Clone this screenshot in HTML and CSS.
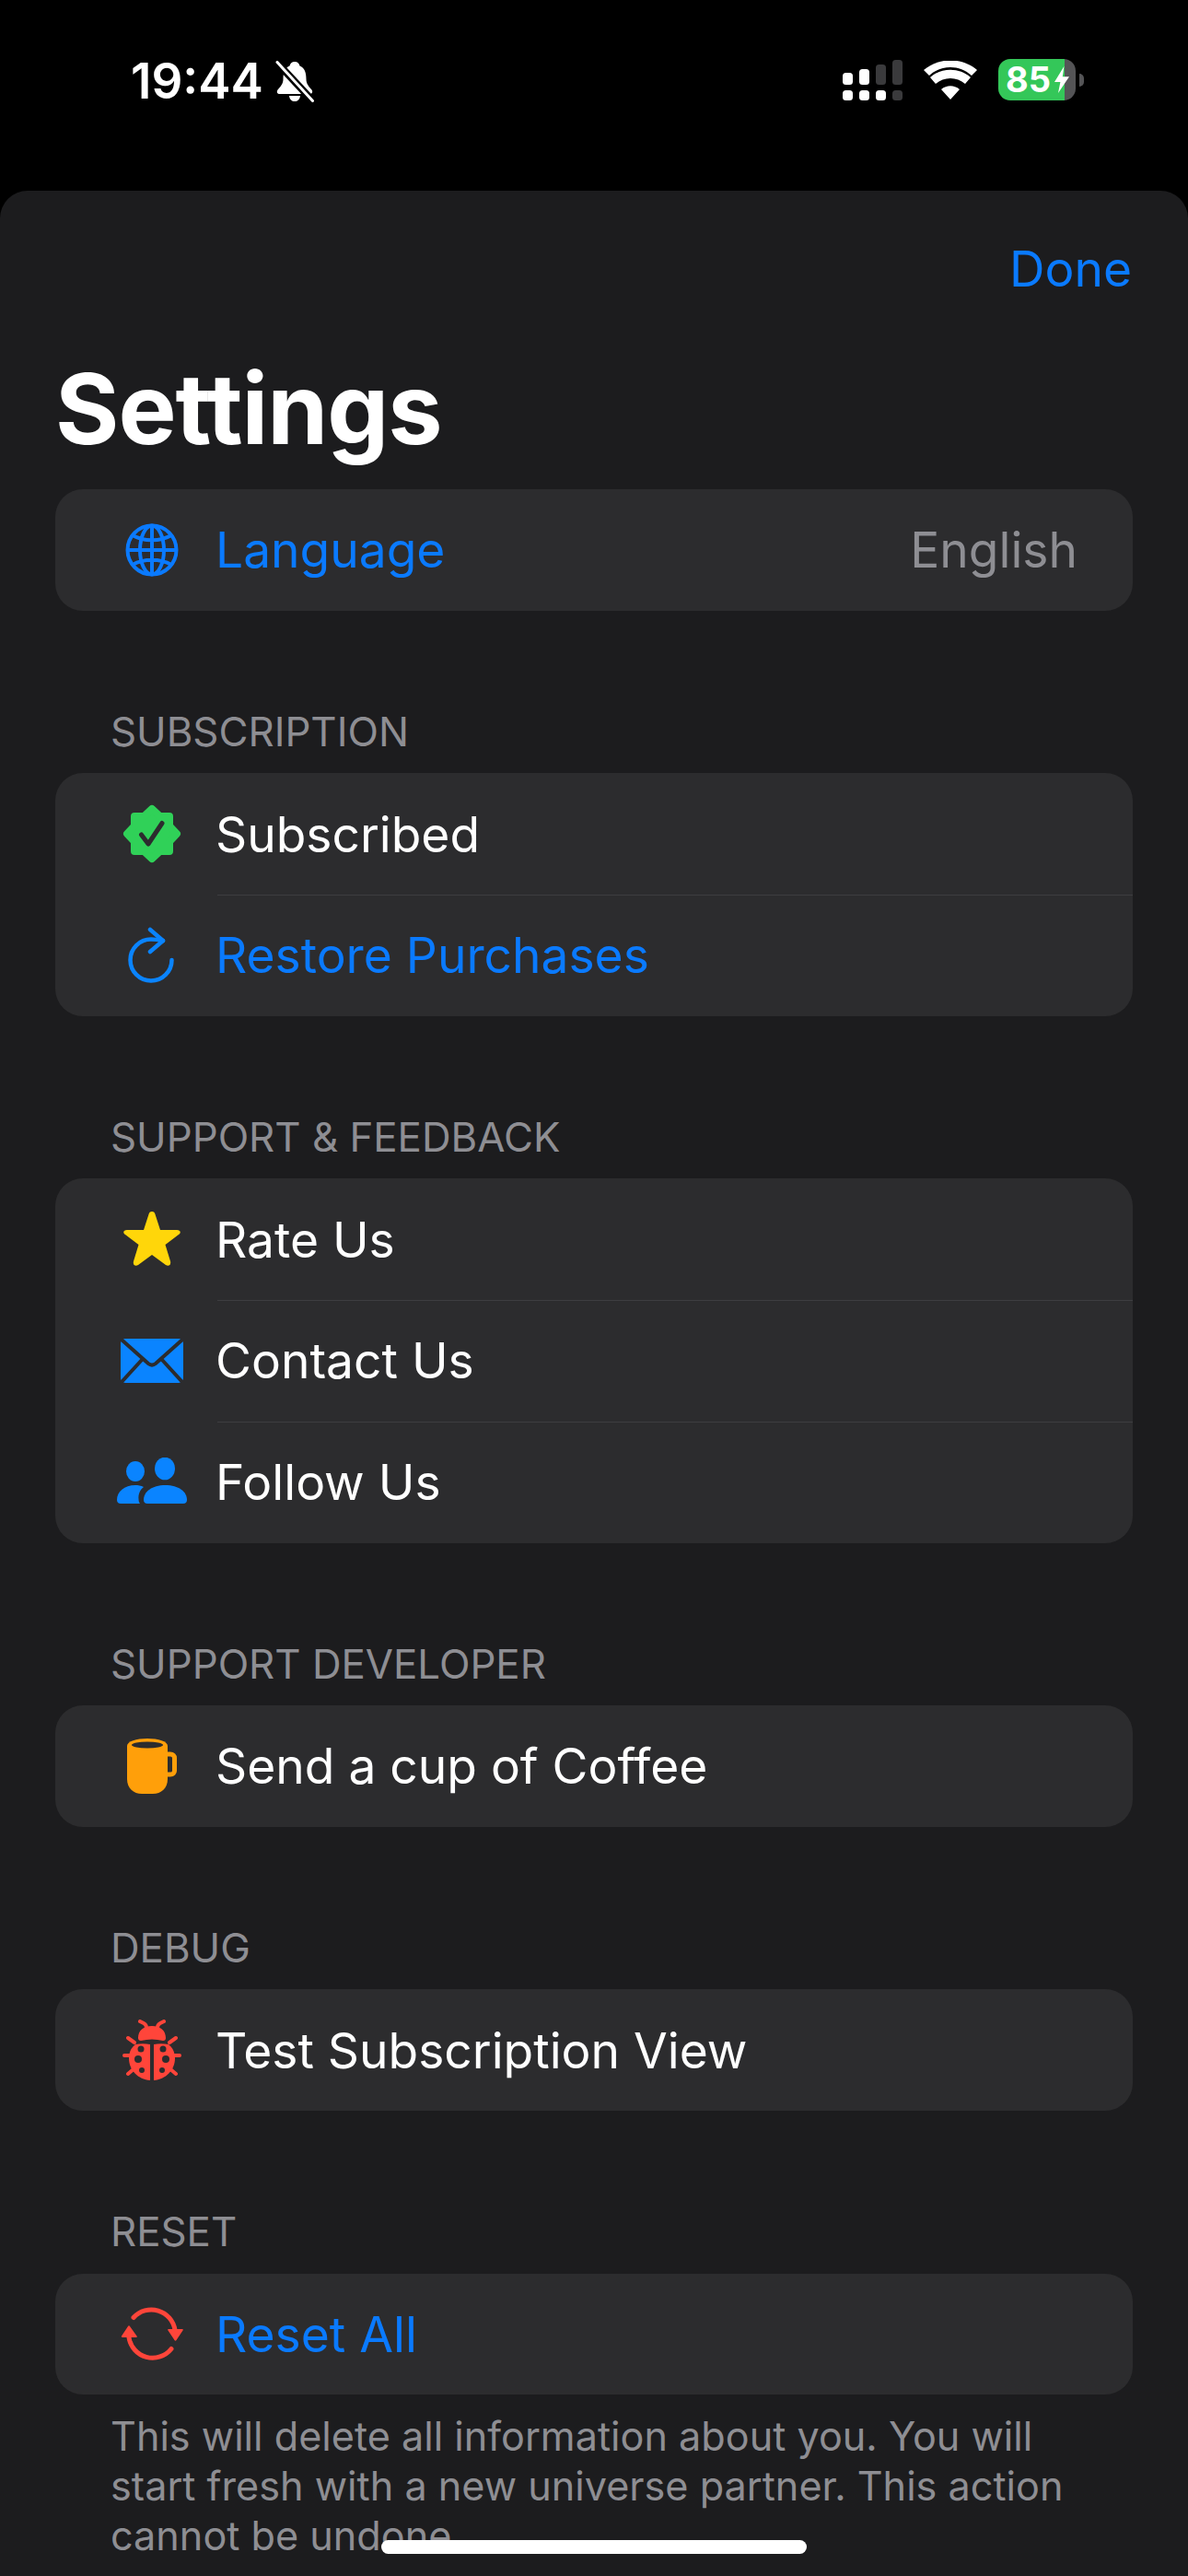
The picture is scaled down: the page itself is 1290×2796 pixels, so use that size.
FILE: index.html
```html
<!DOCTYPE html>
<html lang="en">
  <head>
    <meta charset="UTF-8" />
    <meta name="viewport" content="width=device-width, initial-scale=1.0" />
    <title>Settings</title>
    <link rel="stylesheet" href="styles.css">
  </head>
  <body>
    <div class="status-bar">
      <div class="status-left">
        <span class="clock">19:44</span>
        <svg class="bell" viewBox="0 0 42 45">
          <path fill="#fff" d="M21 1c-3 0-5 2-5.500 4.500C10 8 8.500 13 8.500 20c0 5-3 8-6 11.500C1 34 2 36 5 36h32c3 0 4-2 2.500-4.500C36.500 28 33.500 25 33.500 20c0-7-1.500-12-7-14.500C26 3 24 1 21 1zM15 38c.5 4 3 6 6 6s5.500-2 6-6z"/>
          <path stroke="#000" stroke-width="8" d="M0 0l42 45"/>
          <path stroke="#fff" stroke-width="3" stroke-linecap="round" d="M2 1.500l38.500 42"/>
        </svg>
      </div>
      <div class="status-right">
        <svg class="cell" viewBox="0 0 65 44">
          <g fill="#fff">
            <rect x="0" y="14" width="11" height="13" rx="3.500"/>
            <rect x="18" y="10" width="11" height="17" rx="3.500"/>
            <rect x="0" y="33" width="11" height="11" rx="3.500"/>
            <rect x="18" y="33" width="11" height="11" rx="3.500"/>
            <rect x="36" y="33" width="11" height="11" rx="3.500"/>
          </g>
          <g fill="#3a3a3c">
            <rect x="36" y="5" width="11" height="22" rx="3.500"/>
            <rect x="54" y="0" width="11" height="27" rx="3.500"/>
            <rect x="54" y="33" width="11" height="11" rx="3.500"/>
          </g>
        </svg>
        <svg class="wifi" viewBox="0 0 58 42">
          <path fill="#fff" d="M29 42l-10-11c6-5 14-5 20 0zM13 25l-6-7c12-11 32-11 44 0l-6 7c-9-8-23-8-32 0zM6 16L0 10C16-4 42-4 58 10l-6 6C39 4 19 4 6 16z"/>
        </svg>
        <div class="battery">
          <div class="battery-body">
            <span class="battery-level">85</span>
            <svg class="bolt" viewBox="0 0 20 36">
              <path fill="#fff" d="M13 0L0 21h8L5 36l15-22h-9z"/>
            </svg>
          </div>
          <div class="battery-cap"></div>
        </div>
      </div>
    </div>

    <div class="sheet">
      <div class="sheet-top"><span class="done">Done</span></div>
      <h1 class="title">Settings</h1>

      <div class="card">
        <div class="row">
          <span class="icon">
            <svg width="58" height="58" viewBox="0 0 58 58" fill="none" stroke="#0a7aff" stroke-width="4">
              <circle cx="29" cy="29" r="26.500"/>
              <ellipse cx="29" cy="29" rx="13" ry="26.500"/>
              <path d="M29 2.500v53M2.500 29h53M8 13c12 7 30 7 42 0M8 45c12-7 30-7 42 0"/>
            </svg>
          </span>
          <span class="label blue">Language</span>
          <span class="value">English</span>
        </div>
      </div>

      <div class="section-title">SUBSCRIPTION</div>
      <div class="card">
        <div class="row">
          <span class="icon">
            <svg width="64" height="64" viewBox="0 0 64 64">
              <polygon fill="#30d158" stroke="#30d158" stroke-width="8" stroke-linejoin="round" points="32,5 40.500,13 51,13 51,23.500 59,32 51,40.500 51,51 40.500,51 32,59 23.500,51 13,51 13,40.500 5,32 13,23.500 13,13 23.500,13"/>
              <path fill="none" stroke="#2c2c2e" stroke-width="5" stroke-linecap="round" stroke-linejoin="round" d="M20.500 33L28 43l15-22.500"/>
            </svg>
          </span>
          <span class="label">Subscribed</span>
        </div>
        <div class="row">
          <span class="icon">
            <svg width="52" height="62" viewBox="0 0 52 62" fill="none" stroke="#0a84ff" stroke-width="4.500" stroke-linecap="round" stroke-linejoin="round">
              <path d="M47.500 36A22.500 22.500 0 1 1 25 13.500c4 0 8 .5 13 1.500"/>
              <path d="M24 3l14 12-14 12"/>
            </svg>
          </span>
          <span class="label blue">Restore Purchases</span>
        </div>
      </div>

      <div class="section-title">SUPPORT &amp; FEEDBACK</div>
      <div class="card">
        <div class="row">
          <span class="icon">
            <svg width="62" height="60" viewBox="0 0 62 60">
              <path fill="#ffd60a" d="M31 0c2 0 3 1 3.500 3l5.500 17h18c4 0 5 3 2 5L45.500 36l5.500 18c1 4-2 6-5 4L31 47 16 58c-3 2-6 0-5-4l5.500-18L2 25c-3-2-2-5 2-5h18l5.500-17C28 1 29 0 31 0z"/>
            </svg>
          </span>
          <span class="label">Rate Us</span>
        </div>
        <div class="row">
          <span class="icon">
            <svg width="68" height="48" viewBox="0 0 68 48">
              <rect width="68" height="48" rx="5" fill="#0a84ff"/>
              <path fill="none" stroke="#2c2c2e" stroke-width="4" stroke-linecap="round" d="M2 2l28 25c2.500 2 5.500 2 8 0L66 2M1 47l22-24M67 47L45 23"/>
            </svg>
          </span>
          <span class="label">Contact Us</span>
        </div>
        <div class="row">
          <span class="icon">
            <svg width="76" height="54" viewBox="0 0 76 54">
              <g fill="#0a84ff">
                <ellipse cx="20" cy="15" rx="10" ry="11"/>
                <ellipse cx="52" cy="12" rx="11" ry="12.300"/>
                <path d="M0 46C0 37 8 30 20 30c3 0 6 .5 9 2-4 3-6 8-5.500 13 0 2 .5 4 1.500 5H4c-2.500 0-4-1.500-4-4z"/>
                <path d="M29 46c0-9 9-16 23.500-16S76 37 76 46c0 2.500-1.500 4-4 4H33c-2.500 0-4-1.500-4-4z"/>
              </g>
            </svg>
          </span>
          <span class="label">Follow Us</span>
        </div>
      </div>

      <div class="section-title">SUPPORT DEVELOPER</div>
      <div class="card">
        <div class="row">
          <span class="icon">
            <svg width="54" height="60" viewBox="0 0 54 60">
              <path fill="#ff9f0a" d="M0 8c0-5 10-8 22-8s22 3 22 8v36c0 10-7 16-16 16H16C7 60 0 54 0 44z"/>
              <ellipse cx="22" cy="7" rx="17" ry="3.500" fill="#2c2c2e"/>
              <path fill="none" stroke="#ff9f0a" stroke-width="5" d="M43 17h4c3 0 4.500 2 4.500 4v14c0 2-1.500 4-4.500 4h-4"/>
            </svg>
          </span>
          <span class="label">Send a cup of Coffee</span>
        </div>
      </div>

      <div class="section-title">DEBUG</div>
      <div class="card">
        <div class="row">
          <span class="icon">
            <svg width="64" height="66" viewBox="0 0 64 66">
              <g fill="none" stroke="#ff453a" stroke-width="4" stroke-linecap="round">
                <path d="M19 2l4 2c2 1 3 3 3 5M45 2l-4 2c-2 1-3 3-3 5M6 20l7 5M58 20l-7 5M2 39h9M62 39h-9M6 59l7-6M58 59l-7-6"/>
              </g>
              <path fill="#ff453a" d="M32 7c9 0 15 5 15 13 0 2-1 3-3 3-8-2-16-2-24 0-2 0-3-1-3-3 0-8 6-13 15-13z"/>
              <path fill="#ff453a" d="M30 27v39C17 65 7 55 7 42c0-7 3-12 7-15 5-1 11-1 16 0zM34 27v39c13-1 23-11 23-24 0-7-3-12-7-15-5-1-11-1-16 0z"/>
              <g fill="#2c2c2e">
                <circle cx="20" cy="32" r="3.500"/>
                <circle cx="44" cy="32" r="3.500"/>
                <circle cx="17" cy="43" r="4"/>
                <circle cx="47" cy="43" r="4"/>
                <circle cx="21" cy="55" r="3"/>
                <circle cx="43" cy="55" r="3"/>
              </g>
            </svg>
          </span>
          <span class="label">Test Subscription View</span>
        </div>
      </div>

      <div class="section-title">RESET</div>
      <div class="card">
        <div class="row">
          <span class="icon">
            <svg width="68" height="58" viewBox="0 0 68 58">
              <g fill="none" stroke="#ff453a" stroke-width="5" stroke-linecap="round">
                <path d="M14 11.500A26 26 0 0 1 59 25"/>
                <path d="M55 45.500A26 26 0 0 1 9 33"/>
              </g>
              <path fill="#ff453a" d="M52 24h15c1 0 1 1 .5 1.500L60.500 36c-.5 1-1.500 1-2 0l-7-10.500C51 25 51 24 52 24zM17 33H2c-1 0-1.500-1-1-1.500L8 21c.5-1 1.500-1 2 0l7.500 10.500c.5.500.5 1.500-.5 1.500z"/>
            </svg>
          </span>
          <span class="label blue">Reset All</span>
        </div>
      </div>
      <p class="footnote">This will delete all information about you. You will start fresh with a new universe partner. This action cannot be undone.</p>
    </div>

    <div class="home-indicator"></div>
  </body>
</html>
```

FILE: styles.css
```css
/* General */
html,
body {
  height: 2796px;
  overflow: hidden;
}

body {
  margin: 0;
  position: relative;
  background-color: #000;
  font-family: Inter, "Noto Sans", sans-serif;
  color: #fff;
}

/* Status bar */
.status-bar {
  height: 207px;
  box-sizing: border-box;
  padding: 56px 113px 0 142px;
  display: flex;
  justify-content: space-between;
  align-items: flex-start;
}

.status-left {
  display: flex;
  align-items: center;
  gap: 13px;
}

.clock {
  font-size: 53px;
  line-height: 64px;
  font-weight: 600;
}

.bell {
  width: 42px;
  height: 45px;
}

.status-right {
  display: flex;
  align-items: center;
  gap: 23px;
  margin-top: 8px;
}

.cell {
  width: 65px;
  height: 44px;
}

.wifi {
  width: 58px;
  height: 42px;
}

.battery {
  display: flex;
  align-items: center;
  gap: 4px;
}

.battery-body {
  width: 84px;
  height: 45px;
  border-radius: 13px;
  background: linear-gradient(90deg, #34c759 0, #34c759 86%, #545456 86%);
  display: flex;
  align-items: center;
  padding-left: 8px;
  gap: 4px;
  box-sizing: border-box;
}

.battery-level {
  font-size: 38px;
  line-height: 45px;
  font-weight: 700;
}

.bolt {
  width: 16px;
  height: 29px;
  flex-shrink: 0;
}

.battery-cap {
  width: 5px;
  height: 14px;
  background: #545456;
  border-radius: 0 5px 5px 0;
}

/* Sheet */
.sheet {
  height: 2589px;
  background-color: #1c1c1e;
  border-radius: 30px 30px 0 0;
  padding: 0 60px;
  box-sizing: border-box;
  overflow: hidden;
}

.sheet-top {
  height: 168px;
  display: flex;
  justify-content: flex-end;
  align-items: center;
}

.done {
  font-size: 53.3px;
  color: #0a7aff;
  margin-right: 1px;
}

.title {
  margin: 0;
  height: 156px;
  font-size: 106px;
  line-height: 138px;
  font-weight: 700;
  letter-spacing: -1px;
}

/* Cards */
.card {
  background-color: #2c2c2e;
  border-radius: 30px;
  overflow: hidden;
}

.row {
  height: 131.75px;
  box-sizing: border-box;
  padding: 0 60px 0 70px;
  display: flex;
  align-items: center;
  position: relative;
}

.row + .row::before {
  content: "";
  position: absolute;
  top: 0;
  left: 176px;
  right: 0;
  height: 1px;
  background-color: #3d3d40;
}

.icon {
  width: 70px;
  margin-right: 34px;
  display: flex;
  justify-content: center;
  flex-shrink: 0;
}

.icon svg {
  flex-shrink: 0;
}

.label {
  font-size: 53.3px;
  flex: 1;
}

.blue {
  color: #0a7aff;
}

.value {
  font-size: 53.3px;
  color: #8e8e93;
}

.section-title {
  height: 176.5px;
  box-sizing: border-box;
  padding: 108px 0 0 60px;
  font-size: 43.8px;
  line-height: 48px;
  color: #8e8e93;
}

.footnote {
  margin: 18px 0 0;
  padding: 0 60px;
  font-size: 43.2px;
  line-height: 54px;
  color: #8e8e93;
}

/* Home indicator */
.home-indicator {
  position: absolute;
  left: 414px;
  top: 2757px;
  width: 462px;
  height: 15px;
  border-radius: 8px;
  background-color: #fff;
}
```
